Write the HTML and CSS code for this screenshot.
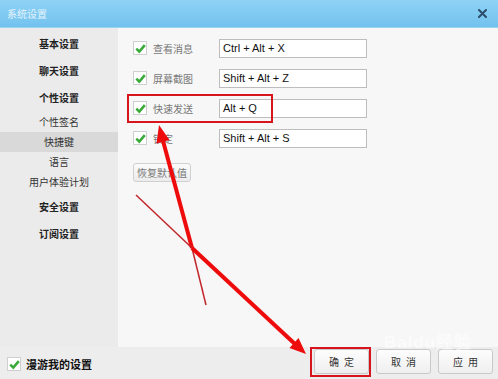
FILE: index.html
```html
<!DOCTYPE html>
<html lang="zh-CN">
<head>
  <meta charset="UTF-8">
  <title>系统设置</title>
  <link rel="stylesheet" href="styles.css">
</head>
<body>
  <div class="window">
    <div class="titlebar">
      <span class="title">系统设置</span>
      <svg class="close" width="9" height="9" viewBox="0 0 9 9">
        <path d="M1 1 L8 8 M8 1 L1 8" stroke="#2b4d69" stroke-width="2" stroke-linecap="round"/>
      </svg>
    </div>

    <div class="main">
      <div class="sidebar">
        <div class="group">基本设置</div>
        <div class="group">聊天设置</div>
        <div class="group">个性设置</div>
        <div class="sub first">个性签名</div>
        <div class="sub selected">快捷键</div>
        <div class="sub">语言</div>
        <div class="sub">用户体验计划</div>
        <div class="group after">安全设置</div>
        <div class="group">订阅设置</div>
      </div>

      <div class="content">
        <div class="row">
          <span class="check"><svg width="11" height="11" viewBox="0 0 11 11"><path d="M1.3 5.6 L4.3 8.6 L9.8 2.2" fill="none" stroke="#3aab39" stroke-width="2.6"/></svg></span>
          <span class="label">查看消息</span>
          <span class="hotkey">Ctrl + Alt + X</span>
        </div>
        <div class="row">
          <span class="check"><svg width="11" height="11" viewBox="0 0 11 11"><path d="M1.3 5.6 L4.3 8.6 L9.8 2.2" fill="none" stroke="#3aab39" stroke-width="2.6"/></svg></span>
          <span class="label">屏幕截图</span>
          <span class="hotkey">Shift + Alt + Z</span>
        </div>
        <div class="row">
          <span class="check"><svg width="11" height="11" viewBox="0 0 11 11"><path d="M1.3 5.6 L4.3 8.6 L9.8 2.2" fill="none" stroke="#3aab39" stroke-width="2.6"/></svg></span>
          <span class="label">快速发送</span>
          <span class="hotkey">Alt + Q</span>
        </div>
        <div class="row">
          <span class="check"><svg width="11" height="11" viewBox="0 0 11 11"><path d="M1.3 5.6 L4.3 8.6 L9.8 2.2" fill="none" stroke="#3aab39" stroke-width="2.6"/></svg></span>
          <span class="label">锁定</span>
          <span class="hotkey">Shift + Alt + S</span>
        </div>
        <button class="reset-btn">恢复默认值</button>
      </div>
    </div>

    <div class="footer">
      <div class="roam">
        <span class="check"><svg width="11" height="11" viewBox="0 0 11 11"><path d="M1.3 5.6 L4.3 8.6 L9.8 2.2" fill="none" stroke="#3aab39" stroke-width="2.6"/></svg></span>
        <span class="roam-text">漫游我的设置</span>
      </div>
      <div class="actions">
        <button class="action-btn">确定</button>
        <button class="action-btn">取消</button>
        <button class="action-btn">应用</button>
      </div>
    </div>

    <div class="watermark">Baidu经验</div>

    <!-- red annotations drawn over the screenshot -->
    <svg class="marks" width="498" height="379" viewBox="0 0 498 379">
      <rect x="128" y="95" width="144" height="27" fill="none" stroke="#d8141c" stroke-width="2"/>
      <rect x="311" y="348" width="59" height="28" fill="none" stroke="#d8141c" stroke-width="2"/>
      <line x1="162.5" y1="139" x2="192" y2="248" stroke="#ee0b0b" stroke-width="4"/>
      <line x1="192" y1="248" x2="206" y2="305" stroke="#c2262c" stroke-width="1.5"/>
      <polygon points="159,125 169.5,140 156.5,143.5" fill="#ee0b0b"/>
      <line x1="136" y1="195" x2="192" y2="248" stroke="#c2262c" stroke-width="1.5"/>
      <line x1="192" y1="248" x2="296" y2="345" stroke="#ee0b0b" stroke-width="4"/>
      <polygon points="306,354 289.5,348 298.5,338" fill="#ee0b0b"/>
    </svg>
  </div>
</body>
</html>
```

FILE: styles.css
```css
body {
  margin: 0;
  font-family: "Noto Sans CJK SC", "Liberation Sans", sans-serif;
  font-size: 10px;
}
.window {
  position: relative;
  width: 498px;
  height: 379px;
  overflow: hidden;
  background: #eeeeee;
}
.titlebar {
  height: 28px;
  display: flex;
  align-items: center;
  justify-content: space-between;
  padding: 0 11px 0 7px;
  background: linear-gradient(#8fd2f6, #72c2ee);
  border-bottom: 1px solid #9cd3f0;
  box-sizing: border-box;
}
.title {
  color: #e4f3fc;
  font-size: 10px;
}
.main {
  display: flex;
  height: 319px;
}
.sidebar {
  width: 118px;
  background: #ebebeb;
  padding-top: 2px;
  text-align: center;
}
.group {
  height: 27px;
  line-height: 27px;
  font-weight: bold;
  color: #222;
}
.group.after {
  margin-top: 1px;
}
.sub {
  height: 20px;
  line-height: 20px;
  color: #333;
}
.sub.first {
  margin-top: 1px;
}
.sub.selected {
  background: #d9d9d9;
}
.content {
  flex: 1;
  background: #f7f7f7;
  padding: 5px 0 0 15px;
}
.row {
  height: 30px;
  display: flex;
  align-items: center;
}
.check {
  width: 12px;
  height: 12px;
  border: 1px solid #cfcfcf;
  background: #fff;
  display: flex;
  align-items: center;
  justify-content: center;
  flex-shrink: 0;
}
.label {
  width: 66px;
  margin-left: 6px;
  color: #777;
}
.hotkey {
  width: 143px;
  height: 17px;
  line-height: 17px;
  border: 1px solid #bdbdbd;
  background: #fff;
  padding-left: 3px;
  font-family: "Liberation Sans", sans-serif;
  font-size: 11px;
  color: #111;
}
.reset-btn {
  margin-top: 10px;
  height: 19px;
  padding: 0 3px;
  font-family: "Noto Sans CJK SC", sans-serif;
  font-size: 10px;
  color: #777;
  background: linear-gradient(#fbfbfb, #ececec);
  border: 1px solid #d0d0d0;
  border-radius: 3px;
}
.footer {
  height: 32px;
  display: flex;
  justify-content: space-between;
  align-items: flex-start;
  background: #ededed;
}
.roam {
  display: flex;
  align-items: center;
  gap: 5px;
  margin: 9px 0 0 7px;
}
.roam-text {
  font-size: 11px;
  font-weight: bold;
  color: #111;
}
.actions {
  display: flex;
  gap: 7px;
  padding: 2px 5px 0 0;
}
.action-btn {
  width: 55px;
  height: 25px;
  padding: 0;
  font-family: "Noto Sans CJK SC", sans-serif;
  font-size: 10px;
  letter-spacing: 5px;
  text-indent: 5px;
  color: #333;
  background: linear-gradient(#fdfdfd, #efefef);
  border: 1px solid #c9c9c9;
  border-radius: 3px;
}
.watermark {
  position: absolute;
  left: 384px;
  top: 328px;
  font-family: "Liberation Sans", sans-serif;
  font-size: 17px;
  font-weight: bold;
  color: rgba(255, 255, 255, 0.6);
  letter-spacing: 1px;
}
.marks {
  position: absolute;
  top: 0;
  left: 0;
  pointer-events: none;
}
```
